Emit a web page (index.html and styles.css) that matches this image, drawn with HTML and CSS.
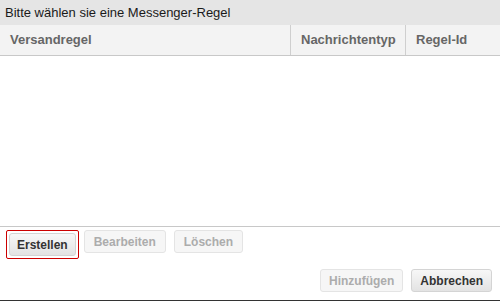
FILE: index.html
```html
<!DOCTYPE html>
<html lang="de">
<head>
  <meta charset="UTF-8" />
  <title>Messenger-Regel</title>
  <link rel="stylesheet" href="styles.css">
</head>
<body>
  <div class="dialog">
    <div class="title">Bitte wählen sie eine Messenger-Regel</div>

    <div class="grid-head">
      <div class="col col-rule">Versandregel</div>
      <div class="col col-type">Nachrichtentyp</div>
      <div class="col col-id">Regel-Id</div>
    </div>

    <div class="grid-body"></div>

    <div class="toolbar">
      <div class="focus-ring">
        <button class="btn">Erstellen</button>
      </div>
      <button class="btn" disabled>Bearbeiten</button>
      <button class="btn" disabled>Löschen</button>
    </div>

    <div class="footer">
      <button class="btn" disabled>Hinzufügen</button>
      <button class="btn">Abbrechen</button>
    </div>
  </div>
</body>
</html>
```

FILE: styles.css
```css
body {
  margin: 0;
  font-family: "Liberation Sans", Arial, sans-serif;
  background-color: #ffffff;
}
.dialog {
  width: 500px;
  height: 301px;
  display: flex;
  flex-direction: column;
  box-sizing: border-box;
  border-bottom: 1px solid #333;
}
.title {
  height: 25px;
  background-color: #e5e5e5;
  color: #1a1a1a;
  font-size: 13px;
  line-height: 25px;
  padding-left: 5px;
}
.grid-head {
  display: flex;
  height: 31px;
  background-color: #f3f3f3;
  border-bottom: 1px solid #c8c8c8;
  box-sizing: border-box;
}
.col {
  font-size: 13px;
  font-weight: bold;
  color: #666;
  line-height: 30px;
  padding-left: 10px;
  box-sizing: border-box;
}
.col-rule {
  flex: 1;
}
.col-type {
  width: 115px;
  border-left: 1px solid #cfcfcf;
}
.col-id {
  width: 95px;
  border-left: 1px solid #cfcfcf;
}
.grid-body {
  flex: 1;
  border-bottom: 1px solid #c8c8c8;
}
.toolbar {
  display: flex;
  gap: 8px;
  padding: 3px 0 0 6px;
  height: 42px;
  box-sizing: border-box;
  align-items: flex-start;
}
.toolbar .btn {
  padding: 0 9px;
}
.focus-ring {
  display: flex;
  padding: 2px;
  margin-right: -3px;
  border: 1px solid #cc0000;
  border-radius: 2px;
}
.toolbar .focus-ring .btn {
  padding: 0 7px;
}
.footer {
  display: flex;
  justify-content: flex-end;
  gap: 8px;
  padding: 0 8px 8px 0;
}
.btn {
  font-family: "Liberation Sans", Arial, sans-serif;
  font-size: 12px;
  font-weight: bold;
  color: #333;
  height: 23px;
  padding: 0 8px;
  border: 1px solid #d4d4d4;
  border-radius: 3px;
  background: linear-gradient(#f7f7f7, #e3e3e3);
}
.btn:disabled {
  color: #acacac;
  border-color: #e4e4e4;
  background: #f6f6f6;
}
```
